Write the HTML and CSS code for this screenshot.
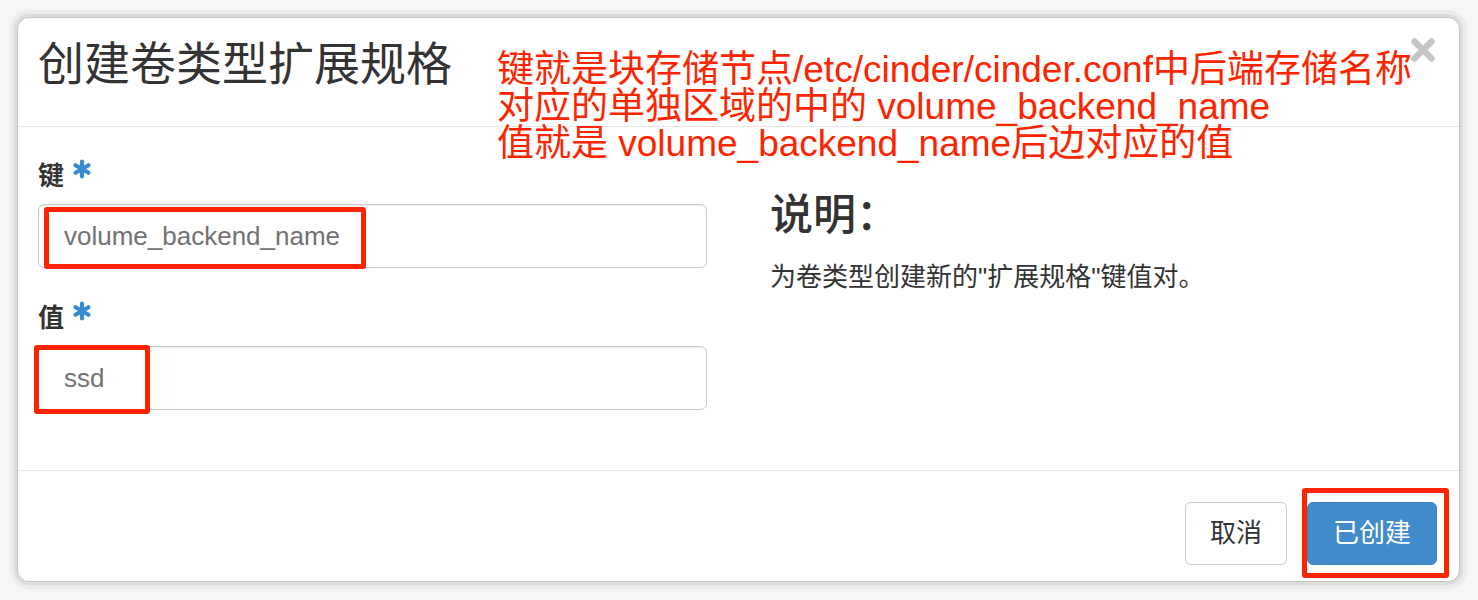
FILE: index.html
```html
<!DOCTYPE html>
<html lang="zh-CN">
<head>
<meta charset="utf-8">
<title>创建卷类型扩展规格</title>
<link rel="stylesheet" href="styles.css">
</head>
<body>
<div class="page">
  <div class="modal">
    <div class="modal-header">
      <h4 class="modal-title">创建卷类型扩展规格</h4>
      <span class="close" aria-label="关闭">
        <svg width="26" height="26" viewBox="0 0 26 26"><path d="M4.5 4.5 L21.5 21.5 M21.5 4.5 L4.5 21.5" stroke="#c6c6c6" stroke-width="6.5" stroke-linecap="round" fill="none"/></svg>
      </span>
    </div>
    <div class="modal-body">
      <div class="form-col">
        <div class="form-group">
          <label class="field-label">键<svg class="req" width="20" height="20" viewBox="0 0 20 20"><path d="M10 2.5 V17.5 M3.5 6.2 L16.5 13.8 M3.5 13.8 L16.5 6.2" stroke="#3b8ad0" stroke-width="4.2" stroke-linecap="round" fill="none"/></svg></label>
          <div class="input">volume_backend_name</div>
        </div>
        <div class="form-group second">
          <label class="field-label">值<svg class="req" width="20" height="20" viewBox="0 0 20 20"><path d="M10 2.5 V17.5 M3.5 6.2 L16.5 13.8 M3.5 13.8 L16.5 6.2" stroke="#3b8ad0" stroke-width="4.2" stroke-linecap="round" fill="none"/></svg></label>
          <div class="input">ssd</div>
        </div>
      </div>
      <div class="help-col">
        <h3 class="help-title">说明：</h3>
        <p class="help-text">为卷类型创建新的"扩展规格"键值对。</p>
      </div>
    </div>
    <div class="modal-footer">
      <button class="btn btn-default">取消</button>
      <button class="btn btn-primary">已创建</button>
    </div>

    <div class="note">键就是块存储节点/etc/cinder/cinder.conf中后端存储名称<br>对应的单独区域的中的 volume_backend_name<br>值就是 volume_backend_name后边对应的值</div>
    <div class="mark mark-key"></div>
    <div class="mark mark-val"></div>
    <div class="mark mark-btn"></div>
  </div>
</div>
</body>
</html>
```

FILE: styles.css
```css
* { box-sizing: border-box; }
html, body {
  margin: 0;
  padding: 0;
  background: #f6f6f6;
  font-family: "Liberation Sans", "Noto Sans CJK SC", sans-serif;
  color: #333;
}
.page {
  padding: 17px 18px 0 17px;
  height: 600px;
}
.modal {
  position: relative;
  width: 1443px;
  background: #fff;
  border: 1px solid #c4c4c4;
  border-radius: 12px;
  box-shadow: 0 0 0 3px #dcdcdc, 0 0 0 7px #ececec, 0 2px 10px rgba(0,0,0,0.08);
}
.modal-header {
  padding: 21px 20px 37px 20px;
  border-bottom: 1px solid #e5e5e5;
}
.modal-title {
  margin: 0;
  font-size: 46px;
  line-height: 50px;
  font-weight: 400;
  color: #333;
}
.close {
  position: absolute;
  top: 19px;
  right: 23px;
  width: 26px;
  height: 26px;
}
.close svg { display: block; }
.modal-body {
  display: grid;
  grid-template-columns: 669px 1fr;
  column-gap: 63px;
  padding: 31px 20px 60px 20px;
}
.form-group { display: flex; flex-direction: column; }
.form-group.second { margin-top: 32px; }
.field-label {
  font-size: 26px;
  line-height: 36px;
  font-weight: 700;
  margin-bottom: 10px;
  display: flex;
  align-items: flex-start;
}
.req {
  margin-left: 8px;
  margin-top: 1px;
}
.input {
  height: 64px;
  border: 1px solid #c9c9c9;
  border-radius: 6px;
  box-shadow: inset 0 1px 1px rgba(0,0,0,0.075);
  padding: 0 25px;
  font-size: 26px;
  line-height: 62px;
  color: #727272;
}
.help-col { padding-top: 32px; }
.help-title {
  margin: 0;
  font-size: 43px;
  line-height: 50px;
  font-weight: 500;
  color: #333;
}
.help-text {
  margin: 19px 0 0 0;
  font-size: 26px;
  line-height: 36px;
  color: #333;
}
.modal-footer {
  border-top: 1px solid #e5e5e5;
  padding: 31px 22px 16px 0;
  display: flex;
  justify-content: flex-end;
  gap: 20px;
}
.btn {
  height: 63px;
  padding: 0 24px;
  font-family: inherit;
  font-size: 26px;
  line-height: 61px;
  border-radius: 6px;
  border: 1px solid #ccc;
  background: #fff;
  color: #333;
}
.btn-primary {
  background: #428bca;
  border-color: #3b80bd;
  color: #fff;
  padding: 0 25px;
}
.note {
  position: absolute;
  left: 479px;
  top: 33px;
  font-size: 37px;
  line-height: 37px;
  color: #fe2400;
  white-space: nowrap;
}
.mark {
  position: absolute;
  border: 5px solid #fe2400;
  border-radius: 3px;
}
.mark-key { left: 26px; top: 189px; width: 322px; height: 62px; }
.mark-val { left: 16px; top: 327px; width: 116px; height: 69px; }
.mark-btn { left: 1284px; top: 470px; width: 147px; height: 90px; }
```
